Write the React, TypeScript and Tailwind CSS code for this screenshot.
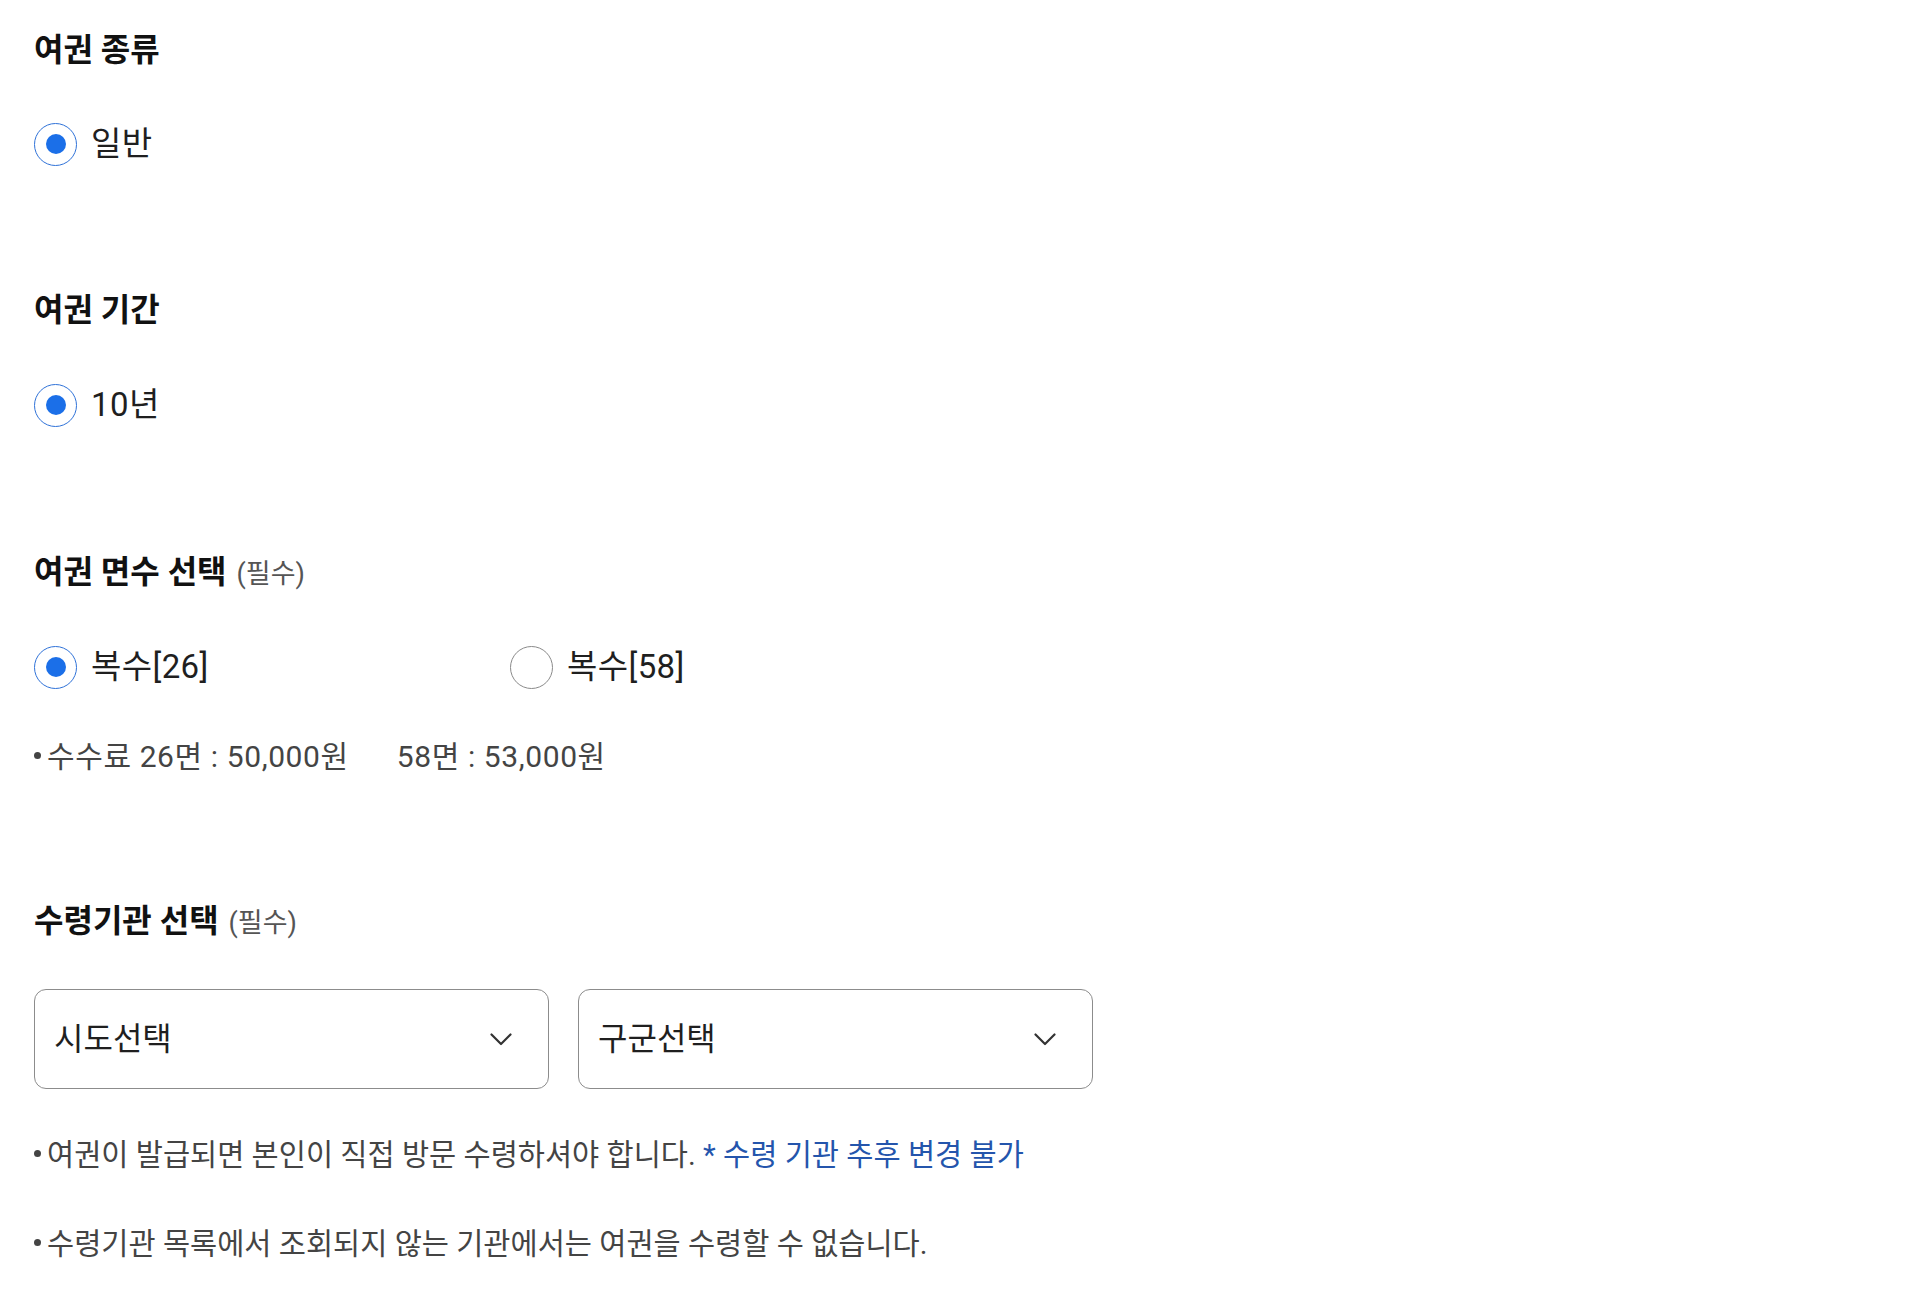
import { useState } from "react";

const FONT = { fontFamily: '"Roboto", "Noto Sans CJK KR", sans-serif' };

function Radio({
  checked,
  label,
  onClick,
  className = "",
}: {
  checked: boolean;
  label: string;
  onClick?: () => void;
  className?: string;
}) {
  return (
    <button type="button" onClick={onClick} className={`flex items-center gap-[14px] ${className}`}>
      <span
        className={
          checked
            ? "flex h-[43px] w-[43px] shrink-0 items-center justify-center rounded-full border-[1.5px] border-[#2f72d8]"
            : "flex h-[43px] w-[43px] shrink-0 items-center justify-center rounded-full border-[1.5px] border-[#8a8a8a]"
        }
      >
        {checked && <span className="h-[20px] w-[20px] rounded-full bg-[#1b6fe8]" />}
      </span>
      <span className="text-[33px] leading-[44px] tracking-[0.4px] text-[#1f1f1f]">{label}</span>
    </button>
  );
}

function Heading({ title, required }: { title: string; required?: boolean }) {
  return (
    <h2 className="flex items-baseline text-[32px] leading-[40px] font-bold text-[#111]">
      {title}
      {required && <span className="ml-[10px] text-[27px] font-normal text-[#555]">(필수)</span>}
    </h2>
  );
}

function Bullet() {
  return <span className="mr-[6px] inline-block h-[7px] w-[7px] rounded-full bg-[#444] align-[8px]" />;
}

function Select({ placeholder }: { placeholder: string }) {
  return (
    <div className="flex h-[100px] w-[515px] items-center justify-between rounded-[12px] border border-[#8c8c8c] pl-[19px] pr-[36px]">
      <span className="text-[32px] text-[#1f1f1f]">{placeholder}</span>
      <svg width="22" height="13" viewBox="0 0 22 13" fill="none">
        <path d="M1.5 1.5L11 11L20.5 1.5" stroke="#333" strokeWidth="2.2" strokeLinecap="round" strokeLinejoin="round" />
      </svg>
    </div>
  );
}

export default function App() {
  const [pages, setPages] = useState<26 | 58>(26);

  return (
    <div className="min-h-screen bg-white pl-[34px] pt-[30px]" style={FONT}>
      <Heading title="여권 종류" />
      <div className="mt-[52px]">
        <Radio checked label="일반" />
      </div>

      <div className="mt-[124px]">
        <Heading title="여권 기간" />
      </div>
      <div className="mt-[53px]">
        <Radio checked label="10년" />
      </div>

      <div className="mt-[125px]">
        <Heading title="여권 면수 선택" required />
      </div>
      <div className="mt-[51px] flex">
        <Radio className="w-[476px]" checked={pages === 26} label="복수[26]" onClick={() => setPages(26)} />
        <Radio checked={pages === 58} label="복수[58]" onClick={() => setPages(58)} />
      </div>
      <p className="mt-[48px] text-[30px] leading-[40px] tracking-[0.6px] text-[#444]">
        <Bullet />수수료 26면 : 50,000원
        <span className="ml-[48px]">58면 : 53,000원</span>
      </p>

      <div className="mt-[124px]">
        <Heading title="수령기관 선택" required />
      </div>
      <div className="mt-[46px] flex gap-[29px]">
        <Select placeholder="시도선택" />
        <Select placeholder="구군선택" />
      </div>

      <p className="mt-[46px] text-[29.5px] leading-[40px] text-[#444]">
        <Bullet />여권이 발급되면 본인이 직접 방문 수령하셔야 합니다.{" "}
        <span className="text-[#2455ac]">* 수령 기관 추후 변경 불가</span>
      </p>
      <p className="mt-[49px] pb-[40px] text-[29.5px] leading-[40px] text-[#444]">
        <Bullet />수령기관 목록에서 조회되지 않는 기관에서는 여권을 수령할 수 없습니다.
      </p>
    </div>
  );
}
